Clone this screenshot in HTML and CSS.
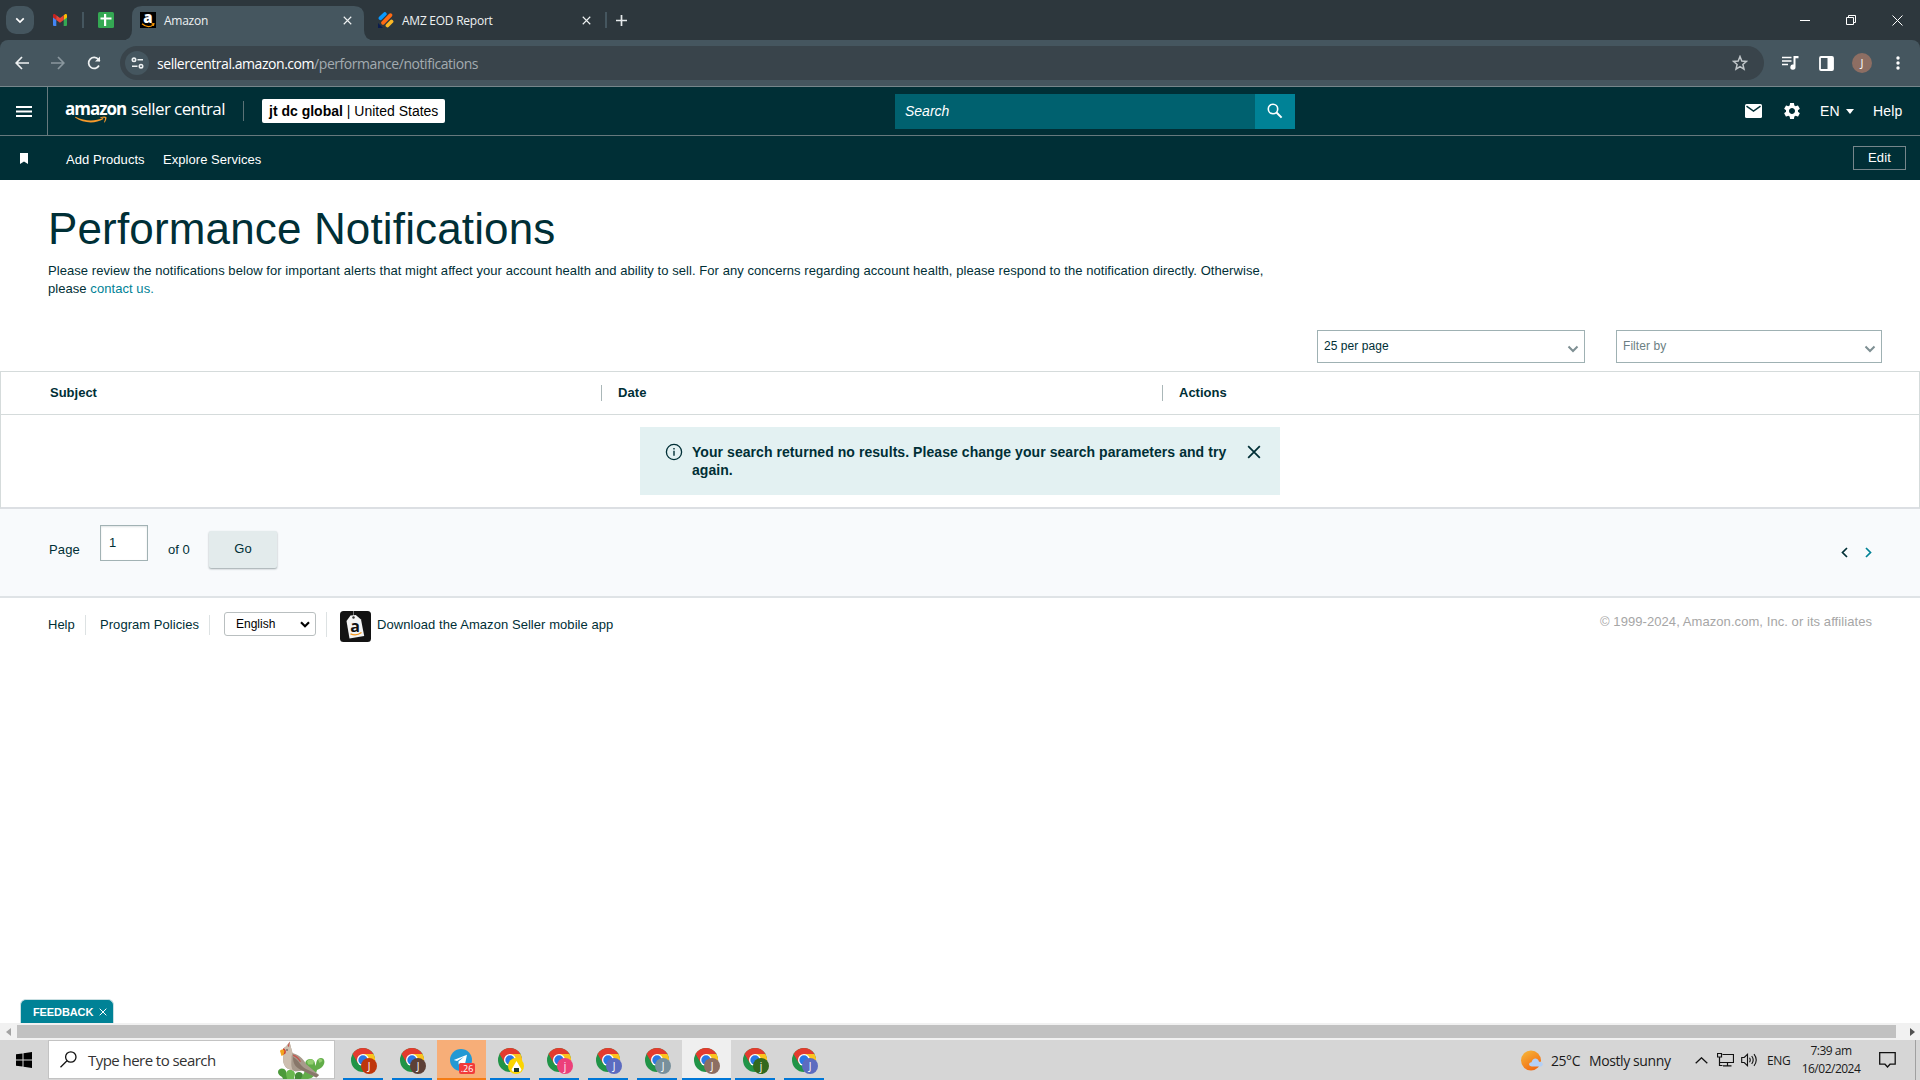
FILE: index.html
```html
<!DOCTYPE html>
<html lang="en">
<head>
<meta charset="utf-8">
<title>Amazon</title>
<link rel="stylesheet" href="styles.css">
</head>
<body>
<svg class="defs" width="0" height="0" aria-hidden="true">
  <symbol id="chrome" viewBox="0 0 24 24">
    <circle cx="12" cy="12" r="12" fill="#219447"/>
    <path d="M12 6H22.4A12 12 0 0 1 12 24L17.2 15z" fill="#fcc31e"/>
    <path d="M1.6 6 6.8 15 12 12V6h10.4A12 12 0 0 0 1.6 6z" fill="#e33b2e"/>
    <circle cx="12" cy="12" r="6" fill="#fff"/>
    <circle cx="12" cy="12" r="4.7" fill="#2a78e4"/>
  </symbol>
  <symbol id="close" viewBox="0 0 12 12"><path d="M1 1 11 11M11 1 1 11" fill="none" stroke="currentColor" stroke-width="1.5"/></symbol>
  <symbol id="chevron" viewBox="0 0 12 8"><path d="M1.500 1.500 6 6l4.500-4.500" fill="none" stroke="currentColor" stroke-width="2"/></symbol>
</svg>

<div class="tabstrip">
  <div class="tab-search"><svg width="10" height="7"><use href="#chevron"/></svg></div>
  <svg class="gmail" width="14" height="12" viewBox="0 0 14 12">
    <path d="M0 1.500V11a1 1 0 0 0 1 1h2.300V4z" fill="#4285f4"/>
    <path d="M14 1.500V11a1 1 0 0 1-1 1h-2.300V4z" fill="#34a853"/>
    <path d="M10.700 1.300V6L14 3.500V1.500c0-1.500-1.500-1.700-2.300-1z" fill="#fbbc04"/>
    <path d="M0 1.500v2L3.300 6V1.300l-1-.8C1.500-.2 0 0 0 1.500z" fill="#c5221f"/>
    <path d="M3.300 1.300V6L7 8.800 10.700 6V1.300L7 4.100z" fill="#ea4335"/>
  </svg>
  <span class="strip-line"></span>
  <svg class="sheets" width="16" height="16" viewBox="0 0 16 16"><rect width="16" height="16" rx="1.500" fill="#34a853"/><path d="M6 2h2.200V5.500H13.500v2H8.200V14H6V7.500H2.500v-2H6z" fill="#fff"/></svg>
  <div class="tab active">
    <span class="amz-icon"><b>a</b><svg width="16" height="5" viewBox="0 0 16 5"><path d="M2 .8c4 3.500 8.500 3.200 11.500.8M11.500.9l2.400-.2-.5 2.200" fill="none" stroke="#f90" stroke-width="1.200"/></svg></span>
    <span class="tab-title">Amazon</span>
    <svg class="tab-x" width="9" height="9"><use href="#close"/></svg>
  </div>
  <div class="tab">
    <svg width="16" height="16" viewBox="0 0 16 16" fill="none" stroke-linecap="round" stroke-width="3.800"><path d="M2.500 6.200 6.800 2" stroke="#0a99ff"/><path d="M5 10.800 12.500 3.200" stroke="#ff6a13"/><path d="M9.500 13.500 13.500 9.500" stroke="#fcb825"/><path d="M0 11v5h5z" fill="#0b1c4d"/></svg>
    <span class="tab-title">AMZ EOD Report</span>
    <svg class="tab-x" width="9" height="9"><use href="#close"/></svg>
  </div>
  <span class="strip-line second"></span>
  <svg class="plus" width="11" height="11" viewBox="0 0 11 11"><path d="M5.500 0v11M0 5.500h11" stroke="#e6eaec" stroke-width="1.700"/></svg>
  <div class="win-buttons">
    <svg width="10" height="10"><path d="M0 5.500h10" stroke="#fff"/></svg>
    <svg width="10" height="10" fill="none" stroke="#fff"><path d="M.5 2.500h7v7h-7zM2.500 2.500v-2h7v7h-2"/></svg>
    <svg width="11" height="11" fill="none" stroke="#fff"><path d="M.5.5l10 10M10.500.5l-10 10"/></svg>
  </div>
</div>

<div class="toolbar">
  <svg class="nav" width="14" height="14" viewBox="0 0 14 14"><path d="M14 7H1.500M7 1 1.200 7 7 13" fill="none" stroke="#eef1f2" stroke-width="1.700"/></svg>
  <svg class="nav" width="14" height="14" viewBox="0 0 14 14"><path d="M0 7h12.500M7 1l5.800 6L7 13" fill="none" stroke="#8a979e" stroke-width="1.700"/></svg>
  <svg class="nav" width="14" height="14" viewBox="0 0 14 14"><path d="M12 9.500A5.500 5.500 0 1 1 11.500 3.600L12.800 5" fill="none" stroke="#eef1f2" stroke-width="1.700"/><path d="M13 .5V5.500H8z" fill="#eef1f2"/></svg>
  <div class="omnibox">
    <span class="site-info"><svg width="13" height="12" viewBox="0 0 13 12" fill="none" stroke="#eef1f2" stroke-width="1.600"><circle cx="3" cy="2.800" r="1.700"/><path d="M6.500 2.800H12M1 9.200h5.500"/><circle cx="10" cy="9.200" r="1.700"/></svg></span>
    <span class="url"><span class="host">sellercentral.amazon.com</span>/performance/notifications</span>
    <svg class="star" width="16" height="16" viewBox="0 0 16 16"><path d="M8 1.500 9.800 6l4.700.4-3.600 3.100 1.100 4.700L8 11.700l-4 2.500 1.100-4.700L1.500 6.400 6.200 6z" fill="none" stroke="#c0c6c9" stroke-width="1.500"/></svg>
  </div>
  <svg class="t-music" width="17" height="14" viewBox="0 0 17 14"><path d="M0 1.500h9.500M0 5h9.500M0 8.500h6" stroke="#fff" stroke-width="1.600"/><path d="M11.500 0H16.500V2.200H13.500V11A2.600 2.600 0 1 1 11.500 8.600z" fill="#fff"/></svg>
  <svg class="t-panel" width="15" height="15" viewBox="0 0 15 15"><rect x="1" y="1" width="13" height="13" rx="1" fill="none" stroke="#fff" stroke-width="1.800"/><path d="M8.500 1H14v13H8.500z" fill="#fff"/></svg>
  <span class="avatar">J</span>
  <svg class="t-more" width="4" height="14" fill="#fff"><circle cx="2" cy="2" r="1.700"/><circle cx="2" cy="7" r="1.700"/><circle cx="2" cy="12" r="1.700"/></svg>
</div>

<header class="sc-header">
  <div class="burger"><svg width="16" height="11"><path d="M0 1h16M0 5.500h16M0 10h16" stroke="#fff" stroke-width="1.800"/></svg></div>
  <div class="logo">
    <span class="logo-amazon">amazon<svg width="34" height="9" viewBox="0 0 34 9"><path d="M1 1.500c9 6 20 6.500 28.500 1.500l-.6-1C21 5.500 11 5.500 1.500.8zM26.500 1.200c2.500-1 5-1 5.800-.2.600 1-.3 4-1.800 5.500-.5.300-.6 0-.4-.4.600-1.500 1.200-3.300.8-4-.6-.6-2.500-.4-4-.2-.6 0-.8-.4-.4-.7z" fill="#f79a2b"/></svg></span>
    <span class="logo-sc">seller central</span>
  </div>
  <span class="logo-line"></span>
  <div class="account"><b>jt dc global</b> | United States</div>
  <div class="search"><span class="search-text">Search</span><span class="search-btn"><svg width="16" height="16" viewBox="0 0 16 16" fill="none" stroke="#fff"><circle cx="6" cy="6" r="4.700" stroke-width="1.600"/><path d="M9.500 9.500 14.600 14.600" stroke-width="2"/></svg></span></div>
  <div class="header-right">
    <svg width="17" height="14" viewBox="0 0 17 14"><rect width="17" height="14" rx="1.500" fill="#fff"/><path d="M1.500 2.200 8.500 7l7-4.800" fill="none" stroke="#002f36" stroke-width="1.500"/></svg>
    <svg class="gear" width="20" height="20" viewBox="0 0 24 24"><path fill="#fff" d="M19.140 12.940c.04-.3.060-.61.060-.94 0-.32-.02-.64-.07-.94l2.030-1.580c.18-.14.23-.41.120-.61l-1.920-3.320c-.12-.22-.37-.29-.59-.22l-2.390.96c-.5-.38-1.030-.7-1.620-.94l-.36-2.540c-.04-.24-.24-.41-.48-.41h-3.840c-.24 0-.43.17-.47.41l-.36 2.540c-.59.240-1.130.57-1.620.94l-2.390-.96c-.22-.08-.47 0-.59.220L2.740 8.870c-.12.210-.08.470.12.610l2.030 1.580c-.05.300-.09.630-.09.940s.02.640.07.940l-2.030 1.580c-.18.140-.23.410-.12.610l1.920 3.320c.12.220.37.290.59.220l2.390-.96c.5.380 1.030.7 1.620.94l.36 2.540c.05.240.24.410.48.410h3.840c.24 0 .44-.17.470-.41l.36-2.540c.59-.24 1.130-.56 1.620-.94l2.390.96c.22.080.47 0 .59-.22l1.920-3.320c.12-.22.070-.47-.12-.61l-2.010-1.580zM12 15.600c-1.980 0-3.600-1.620-3.600-3.600s1.620-3.600 3.600-3.600 3.600 1.620 3.600 3.600-1.620 3.600-3.600 3.600z"/></svg>
    <span class="lang">EN</span>
    <svg class="caret" width="8" height="5"><path d="M0 0h8L4 5z" fill="#fff"/></svg>
    <span class="help">Help</span>
  </div>
</header>

<nav class="sc-nav">
  <svg class="bookmark" width="8" height="11"><path d="M0 0h8v11L4 8.500 0 11z" fill="#fff"/></svg>
  <span class="nav-add">Add Products</span>
  <span class="nav-exp">Explore Services</span>
  <span class="edit">Edit</span>
</nav>

<main class="content">
  <h1>Performance Notifications</h1>
  <p class="intro">Please review the notifications below for important alerts that might affect your account health and ability to sell. For any concerns regarding account health, please respond to the notification directly. Otherwise,<br>please <a class="link">contact us.</a></p>
  <div class="filters">
    <div class="dropdown"><span>25 per page</span><svg width="12" height="8"><use href="#chevron"/></svg></div>
    <div class="dropdown placeholder"><span>Filter by</span><svg width="12" height="8"><use href="#chevron"/></svg></div>
  </div>
  <section class="table">
    <div class="thead">
      <span class="th th-subject">Subject</span>
      <span class="th th-date">Date</span>
      <span class="th th-actions">Actions</span>
    </div>
    <div class="alert">
      <svg width="18" height="18" viewBox="0 0 18 18"><circle cx="9" cy="9" r="7.600" fill="none" stroke="#002f36" stroke-width="1.300"/><path d="M9 7.800v5M9 5v1.500" stroke="#002f36" stroke-width="1.400"/></svg>
      <p>Your search returned no results. Please change your search parameters and try<br>again.</p>
      <svg class="alert-x" width="14" height="14"><use href="#close"/></svg>
    </div>
  </section>
  <div class="pager">
    <span class="p-page">Page</span>
    <span class="p-input">1</span>
    <span class="p-of">of 0</span>
    <span class="go">Go</span>
    <svg class="p-prev" width="7" height="11" viewBox="0 0 7 11"><path d="M6 1 1.500 5.500 6 10" fill="none" stroke="#002f36" stroke-width="1.700"/></svg>
    <svg class="p-next" width="7" height="11" viewBox="0 0 7 11"><path d="M1 1l4.500 4.500L1 10" fill="none" stroke="#008296" stroke-width="1.700"/></svg>
  </div>
  <footer class="footer">
    <span class="f-help">Help</span>
    <span class="f-pol">Program Policies</span>
    <span class="f-lang"><span class="f-select"><span>English</span><svg width="10" height="7" viewBox="0 0 12 8"><path d="M1.200 1.200 6 6l4.800-4.800" fill="none" stroke="#000" stroke-width="2.600"/></svg></span></span>
    <svg class="app" width="31" height="31" viewBox="0 0 31 31">
      <rect width="31" height="31" rx="3.500" fill="#131313"/><path d="M13.500 0v6" stroke="#777"/>
      <path d="M10.500 4.500 15.800 4l5.200 4.500 3.200 16.500L9.500 27.500 6.500 10z" fill="#f4f4f4"/><circle cx="13.500" cy="6.500" r="1.200" fill="#333"/>
      <text x="10.200" y="20.500" class="app-a">a</text><path d="M10.500 22.800c4 1.800 8 1 11-1.300" fill="none" stroke="#f7981d" stroke-width="1.300"/>
    </svg>
    <span class="f-app">Download the Amazon Seller mobile app</span>
    <span class="copy">© 1999-2024, Amazon.com, Inc. or its affiliates</span>
  </footer>
</main>

<div class="feedback"><span>FEEDBACK</span><svg width="8" height="8"><use href="#close"/></svg></div>
<div class="scrollbar"><svg width="5" height="8"><path d="M5 0v8L0 4z" fill="#a3a3a3"/></svg><span class="thumb"></span><svg width="5" height="8"><path d="M0 0v8l5-4z" fill="#505050"/></svg></div>

<div class="taskbar">
  <div class="start"><svg width="16" height="16"><path d="M0 2.300 6.500 1.400V7.500H0zM7.500 1.200 16 0v7.500H7.500zM0 8.500h6.500v6.100L0 13.700zM7.500 8.500H16V16l-8.500-1.200z"/></svg></div>
  <div class="tb-search">
    <svg width="17" height="17" viewBox="0 0 17 17" fill="none" stroke="#111" stroke-width="1.300"><circle cx="10.800" cy="6" r="5.200"/><path d="M7 9.700.5 16.300"/></svg>
    <span class="tb-placeholder">Type here to search</span>
    <svg class="bird" width="48" height="38" viewBox="0 0 48 38">
      <path d="M22 38c3-4 5-7 6-12-2-4 0-8 4-8 3 0 5 2 5 5l1 2c0-4 1-8 5-8 3 0 4 3 3 6s-4 5-7 6c-1 5-4 8-9 9z" fill="#62ad49"/>
      <path d="M29 20.500c2-3 5-3 7-.500l-1 3.500h-5zM40 18.500c2-1.500 4-.5 4.500 1.500l-3 2z" fill="#92cf70"/>
      <path d="M0 31c0-4 6-5 8-1l2 8H5c0-3-5-3-5-7z" fill="#4c9a3b"/>
      <path d="M8 33c0-5 8-6 9 0l-1 5H9z" fill="#6ab84f"/>
      <path d="M17 34c1-4 7-4 8 0l-2 4h-6z" fill="#438c36"/>
      <path d="M11.500 1 8 5.500C4.500 7 3.500 11 5.500 14.500c-1 5 0 10.500 4 13l8 3 8-1L38 36.500l3-2.500-13-11C25 17 20 13.500 14.500 12z" fill="#a89a8c"/>
      <path d="M11.500 1 8 5.500C4.500 7 3.500 11 5.500 14.500c-1 5 0 10.500 4 13l5.500 2c-3-5-1-10-1.500-14L14.500 12z" fill="#cdbfb0"/>
      <path d="M15 16c6 3 7 9 13 12l13 6-2.500 2.500L23 29c-6-3-8-7-8-13z" fill="#88776a"/>
      <path d="M11.800.2 9.500 5l1.500 1zM15 13.500c4 1 6 3.500 8 7l-1 .5c-2-3-4-5-7-6z" fill="#c4574f"/>
      <path d="M5 7.500c2 0 3.500 2 2.500 5L5 14z" fill="#cf4030"/>
      <path d="M2 10c1-2 3.500-2 4.500 0l-1 4-2 1z" fill="#f2a51c"/><circle cx="9" cy="9" r=".7" fill="#222"/>
    </svg>
  </div>
  <div class="apps">
    <div class="app-btn"><svg class="app-ico"><use href="#chrome"/></svg><span class="badge b1">J</span></div>
    <div class="app-btn"><svg class="app-ico"><use href="#chrome"/></svg><span class="badge b2">J</span></div>
    <div class="app-btn telegram"><svg class="tg" width="22" height="22" viewBox="0 0 22 22"><circle cx="11" cy="11" r="11" fill="#2499d4"/><path d="M3.800 11 17 5.800 14.700 16.500 10.800 13.800 8.600 15.600 8.500 12.400 14 7.800 7 12z" fill="#fff"/></svg><span class="count">.26</span></div>
    <div class="app-btn"><svg class="app-ico"><use href="#chrome"/></svg><span class="badge b3"><svg width="11" height="11"><path d="M5.500 0 10.500 8.500 9.500 10.500H1.500L.5 8.500z" fill="#fff"/><path d="M3 7h5v4H3z" fill="#19372c"/></svg></span></div>
    <div class="app-btn"><svg class="app-ico"><use href="#chrome"/></svg><span class="badge b4">j</span></div>
    <div class="app-btn"><svg class="app-ico"><use href="#chrome"/></svg><span class="badge b5">J</span></div>
    <div class="app-btn"><svg class="app-ico"><use href="#chrome"/></svg><span class="badge b6">J</span></div>
    <div class="app-btn current"><svg class="app-ico"><use href="#chrome"/></svg><span class="badge b7">J</span></div>
    <div class="app-btn"><svg class="app-ico"><use href="#chrome"/></svg><span class="badge b8">j</span></div>
    <div class="app-btn"><svg class="app-ico"><use href="#chrome"/></svg><span class="badge b5">J</span></div>
  </div>
  <div class="tray">
    <svg class="weather" width="23" height="21" viewBox="0 0 23 21"><defs><linearGradient id="sun" x1="0" y1="0" x2=".6" y2="1"><stop offset="0" stop-color="#f6bb3c"/><stop offset="1" stop-color="#f26a12"/></linearGradient></defs><circle cx="10" cy="10.500" r="10" fill="url(#sun)"/><path d="M11 16.500c-3.500 0-4-4-.5-4.200 1-5 6.500-5 7.500-.5 4.500-.8 5 4.700 1.500 4.700z" fill="#b4d0f6"/></svg>
    <span class="temp">25°C</span>
    <span class="cond">Mostly sunny</span>
    <svg class="up" width="13" height="7"><path d="M.7 6.300 6.500.8l5.800 5.500" fill="none" stroke="#111" stroke-width="1.300"/></svg>
    <svg class="net" width="17" height="14" fill="none" stroke="#111"><path d="M5.500 1.500h11v8h-11M10.500 9.500v3M6 12.900h8.500M.5.500h4v3.500h-4zM2.500 4v8.500h3M2.500 9.500h3" stroke-width="1.200"/></svg>
    <svg class="vol" width="17" height="14" fill="none" stroke="#111" stroke-width="1.100"><path d="M.7 4.500h2.500L6.500 1.300v11.400L3.200 9.500H.7zM8.500 4.800q1.500 2.200 0 4.400M10.700 3q3 4 0 8M13 1.200q4.500 5.800 0 11.600"/></svg>
    <span class="eng">ENG</span>
    <span class="clock"><span>7:39 am</span><span>16/02/2024</span></span>
    <svg class="notif" width="17" height="16" fill="none" stroke="#111" stroke-width="1.300"><path d="M.7.700h15.500v11.500H11L8.500 15 6 12.200H.7z"/></svg>
    <span class="peek"></span>
  </div>
</div>
</body>
</html>
```
FILE: styles.css
```css
* { box-sizing: border-box; }
body { margin: 0; width: 1920px; height: 1080px; overflow: hidden; background: #fff; color: #002f36; font-family: "Liberation Sans", Arial, sans-serif; font-size: 13px; display: flex; flex-direction: column; }
svg { display: block; flex: none; }
span { white-space: nowrap; }
.defs { position: absolute; }

/* browser chrome */
.tabstrip { height: 40px; background: #2d373d; display: flex; align-items: center; flex: none; font-family: "Open Sans", "Noto Sans", sans-serif; }
.tab-search { width: 28px; height: 28px; margin-left: 6px; border-radius: 10px; background: #45565f; color: #fff; display: flex; align-items: center; justify-content: center; }
.gmail { margin-left: 19px; }
.strip-line { width: 2px; height: 16px; background: #45565f; margin-left: 15px; }
.strip-line.second { margin-left: 14px; }
.sheets { margin-left: 14px; margin-right: 18px; }
.tab { display: flex; align-items: center; height: 34px; margin-top: 6px; padding: 0 0 6px 14px; width: 227px; color: #eef1f2; font-size: 12px; }
.tab.active { background: #45565f; width: 232px; padding: 0 12px 6px 8px; box-shadow: 8px 8px 0 -2px #45565f, -8px 8px 0 -2px #45565f; clip-path: path("M0 10Q0 0 10 0H222Q232 0 232 10V24Q232 34 242 34H-10Q0 34 0 24Z"); }
.tab-title { flex: 1; margin-left: 8px; letter-spacing: -0.25px; }
.amz-icon { width: 16px; height: 16px; background: #000; color: #fff; display: flex; flex-direction: column; align-items: center; font: bold 15px/10px "Open Sans", sans-serif; }
.amz-icon b { height: 11px; }
.plus { margin-left: 9px; }
.win-buttons { margin-left: auto; display: flex; gap: 36px; margin-right: 17px; align-items: center; }
.toolbar { height: 46px; background: #45565f; border-radius: 8px 8px 0 0; box-shadow: 0 -10px 0 #2d373d; clip-path: inset(0); display: flex; align-items: center; flex: none; font-family: "Open Sans", "Noto Sans", sans-serif; }
.nav { margin-left: 15px; margin-right: 7px; }
.omnibox { margin-left: 12px; width: 1644px; height: 34px; border-radius: 17px; background: #39444b; display: flex; align-items: center; padding: 0 16px 0 5px; }
.site-info { width: 24px; height: 24px; border-radius: 12px; background: #45565f; display: flex; align-items: center; justify-content: center; }
.url { margin-left: 8px; font-size: 14px; letter-spacing: -0.45px; color: #a3abb0; flex: 1; }
.host { color: #fff; }
.t-music { margin-left: 18px; }
.t-panel { margin-left: 20px; }
.avatar { width: 20px; height: 20px; border-radius: 10px; background: #8d6e63; color: #fff; font-size: 11px; line-height: 20px; text-align: center; margin-left: 18px; }
.t-more { margin-left: 24px; }

/* seller central header */
.sc-header { height: 50px; flex: none; background: #002f36; border-top: 1px solid #76868b; border-bottom: 1px solid #66797d; color: #fff; display: flex; align-items: center; font-size: 14px; }
.burger { width: 48px; height: 48px; border-right: 1px solid #66797d; display: flex; align-items: center; justify-content: center; }
.logo { display: flex; margin-left: 17px; font-family: "Open Sans", sans-serif; align-items: baseline; margin-top: -6px; }
.logo-amazon { font-weight: 700; font-size: 17px; letter-spacing: -1px; width: 66px; position: relative; }
.logo-amazon svg { position: absolute; left: 9px; top: 19px; }
.logo-sc { font-size: 17px; letter-spacing: -0.58px; width: 94px; }
.logo-line { width: 1px; height: 20px; background: #5b7276; margin-left: 18px; }
.account { margin-left: 18px; width: 183px; height: 24px; border-radius: 2px; background: #fff; color: #000; padding-left: 7px; line-height: 24px; white-space: nowrap; }
.search { margin-left: 450px; width: 400px; height: 35px; background: #00616f; display: flex; align-items: center; }
.search-text { font-style: italic; margin-left: 10px; flex: 1; }
.search-btn { width: 40px; height: 35px; background: #008296; display: flex; align-items: center; justify-content: center; }
.header-right { margin-left: 450px; display: flex; align-items: center; }
.gear { margin-left: 20px; }
.lang { margin-left: 18px; width: 20px; letter-spacing: 0.2px; }
.caret { margin-left: 6px; }
.help { margin-left: 19px; letter-spacing: 0.2px; }
.sc-nav { height: 44px; flex: none; background: #002f36; color: #fff; display: flex; align-items: center; padding: 0 14px 0 20px; }
.nav-add { margin: 2px 0 0 38px; width: 79px; letter-spacing: 0.05px; }
.nav-exp { margin: 2px 0 0 18px; letter-spacing: 0.05px; }
.edit { margin-left: auto; width: 53px; height: 24px; border: 1px solid #76868b; text-align: center; line-height: 21px; letter-spacing: 0.2px; }

/* content */
.content { flex: 1; display: flex; flex-direction: column; }
h1 { margin: 0; padding: 22px 0 0 48px; font-weight: 400; font-size: 44px; line-height: 54px; letter-spacing: 0.15px; }
.intro { margin: 6px 0 0 48px; line-height: 18px; letter-spacing: 0.059px; }
.link { color: #008296; }
.filters { display: flex; justify-content: flex-end; gap: 31px; margin: 32px 38px 8px 0; }
.dropdown { width: 268px; height: 33px; border: 1px solid #9fb1b3; display: flex; align-items: center; justify-content: space-between; padding: 0 5px 0 6px; font-size: 12px; letter-spacing: 0.06px; }
.dropdown + .dropdown { width: 266px; }
.dropdown span { margin-top: -2px; }
.dropdown svg { color: #7e8f93; margin-top: 4px; }
.dropdown.placeholder { color: #6c7f83; }
.table { border: 1px solid #d5dbdb; border-bottom: 2px solid #dcdfe3; height: 138px; }
.thead { height: 43px; border-bottom: 1px solid #d5dbdb; display: flex; align-items: center; font-weight: 700; }
.th { height: 16px; line-height: 16px; }
.th-subject { width: 600px; padding-left: 49px; }
.th-date { width: 561px; border-left: 1px solid #aab7b8; padding-left: 16px; letter-spacing: 0.1px; }
.th-actions { border-left: 1px solid #aab7b8; padding-left: 16px; }
.alert { width: 640px; height: 68px; margin: 12px auto 0; background: #e3f1f2; display: flex; padding: 16px 19px 0 25px; font-weight: 700; font-size: 14px; }
.alert p { margin: 0 0 0 9px; line-height: 18px; flex: 1; letter-spacing: 0.06px; white-space: nowrap; }
.alert-x { margin-top: 2px; }
.pager { height: 89px; background: #f8fafc; border-bottom: 2px solid #dfe3e6; display: flex; align-items: flex-start; padding-left: 49px; }
.p-page { width: 51px; margin-top: 33px; letter-spacing: 0.15px; }
.p-input { width: 48px; height: 36px; border: 1px solid #a2b2b4; background: #fff; margin-top: 16px; padding-left: 8px; line-height: 33px; box-shadow: inset 0 1px 2px #e0e4e5; }
.p-of { margin: 33px 0 0 20px; width: 41px; }
.go { width: 68px; height: 37px; margin-top: 22px; background: #e3ebec; border-radius: 2px; box-shadow: 0 1px 2px #9ba5a8; text-align: center; line-height: 35px; }
.p-prev { margin: 38px 0 0 auto; }
.p-next { margin: 38px 48px 0 17px; }
.footer { display: flex; padding-left: 48px; height: 60px; align-items: flex-start; }
.f-help { width: 38px; height: 20px; border-right: 1px solid #dde2e3; margin-top: 17px; line-height: 20px; }
.f-pol { width: 124px; height: 20px; border-right: 1px solid #dde2e3; margin-top: 17px; line-height: 20px; padding-left: 14px; letter-spacing: 0.05px; }
.f-lang { width: 117px; height: 25px; border-right: 1px solid #dde2e3; margin-top: 14px; padding-left: 14px; }
.f-select { width: 92px; height: 24px; border: 1px solid #b9bfc0; border-radius: 3px; display: flex; align-items: center; justify-content: space-between; padding: 0 5px 0 11px; color: #000; font-size: 12px; }
.app { margin: 13px 0 0 13px; }
.app-a { font: bold 16px "Open Sans", sans-serif; fill: #111; }
.f-app { margin: 19px 0 0 6px; letter-spacing: 0.06px; }
.copy { margin: 16px 48px 0 auto; color: #a6a6a6; letter-spacing: 0.068px; }
.feedback { width: 94px; height: 24px; margin-left: 20px; background: #008296; color: #fff; border-radius: 6px 6px 0 0; border: 1px solid #c9dfe2; border-bottom: 0; flex: none; display: flex; align-items: center; gap: 6px; padding-left: 12px; font-weight: 700; font-size: 11px; letter-spacing: -0.1px; }
.scrollbar { height: 17px; background: #f1f1f1; flex: none; display: flex; align-items: center; padding: 0 5px 0 6px; justify-content: space-between; }
.thumb { width: 1879px; height: 13px; background: #c1c1c1; margin-right: 8px; }

/* taskbar */
.taskbar { height: 40px; flex: none; background: #d6d6d6; display: flex; font-family: "Open Sans", "Noto Sans", sans-serif; color: #1a1a1a; }
.start { width: 48px; padding: 12px 0 0 16px; }
.tb-search { width: 287px; height: 39px; border: 1px solid #c3c3c3; background: #fff; display: flex; align-items: center; padding-left: 11px; }
.tb-placeholder { font-size: 15px; letter-spacing: -0.55px; margin-left: 11px; width: 190px; color: #333; }
.apps { display: flex; margin-left: 4px; }
.app-btn { width: 49px; height: 40px; position: relative; border: solid transparent; border-width: 0 5px 0 4px; background: linear-gradient(#0077d7,#0077d7) center bottom / 100% 2px no-repeat; background-clip: padding-box; display: flex; justify-content: center; padding-top: 8px; }
.app-ico { width: 24px; height: 24px; }
.badge { position: absolute; left: 18px; top: 18px; width: 16px; height: 16px; border-radius: 8px; color: #fff; font-size: 10px; line-height: 16px; display: flex; justify-content: center; align-items: center; }
.b1 { background: #bf360c; }
.b2 { background: #5d4037; }
.b3 { background: #fbd500; }
.b4 { background: #ec407a; }
.b5 { background: #5c6bc0; }
.b6 { background: #78909c; }
.b7 { background: #8d6e63; }
.b8 { background: #33691e; }
.telegram { background: linear-gradient(#f57c14,#f57c14) center bottom / 100% 2px no-repeat #f7ae78; border-width: 0; padding-right: 1px; }
.tg { margin-top: 1px; }
.count { position: absolute; left: 22px; top: 23px; width: 16px; height: 11px; border-radius: 2px; background: #f13b3b; color: #fff; font-size: 9px; line-height: 11px; text-align: center; }
.current { background: linear-gradient(#0077d7,#0077d7) center bottom / 100% 2px no-repeat #efefef; border-width: 0; padding-right: 1px; }
.current .badge { left: 22px; }
.tray { margin-left: auto; display: flex; align-items: center; font-size: 14px; }
.weather { margin-right: 7px; }
.temp { width: 38px; letter-spacing: -0.45px; }
.cond { width: 106px; letter-spacing: -0.4px; }
.up { margin-right: 9px; }
.net { margin-right: 7px; }
.vol { margin-right: 9px; }
.eng { font-size: 12px; width: 34px; letter-spacing: -0.4px; }
.clock { font-size: 12px; width: 60px; display: flex; flex-direction: column; align-items: center; line-height: 18px; letter-spacing: -0.5px; }
.notif { margin-left: 18px; }
.peek { width: 5px; height: 40px; border-left: 1px solid #a0a0a0; margin-left: 19px; }
```
